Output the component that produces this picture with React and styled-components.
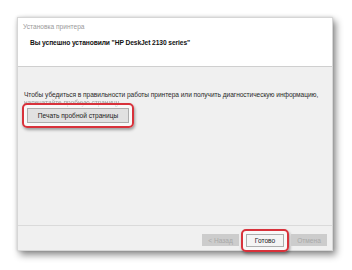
import React from 'react';
import styled, { createGlobalStyle } from 'styled-components';

const GlobalStyle = createGlobalStyle`
  html, body {
    margin: 0;
    padding: 0;
    background: #ffffff;
  }
  body {
    font-family: 'Liberation Sans', Arial, sans-serif;
  }
`;

const Page = styled.div`
  width: 352px;
  height: 270px;
  padding: 17px 0 0 17px;
  box-sizing: border-box;
`;

const Window = styled.div`
  width: 316px;
  height: 234px;
  display: flex;
  flex-direction: column;
  background: #f0f0f0;
  border: 1px solid #d6d6d6;
  box-sizing: border-box;
  box-shadow: 3px 4px 7px rgba(0, 0, 0, 0.45), 0 0 3px rgba(0, 0, 0, 0.15);
`;

const Header = styled.div`
  height: 49px;
  flex-shrink: 0;
  background: #ffffff;
  border-bottom: 1px solid #cfcfcf;
  box-sizing: border-box;
  padding: 4px 0 0 5px;
`;

const Caption = styled.div`
  font-size: 6.6px;
  line-height: 9px;
  color: #9a9a9a;
  white-space: nowrap;
`;

const Heading = styled.div`
  margin: 7px 0 0 7px;
  font-size: 6.7px;
  line-height: 9px;
  font-weight: 700;
  color: #111;
  letter-spacing: -0.1px;
  white-space: nowrap;
`;

const Content = styled.div`
  flex: 1;
  padding: 24px 0 0 6px;
`;

const Paragraph = styled.div`
  font-size: 6.6px;
  line-height: 8px;
  color: #2a2a2a;
  letter-spacing: -0.05px;
  white-space: nowrap;
`;

const FadedLine = styled(Paragraph)`
  color: #a0a0a0;
  filter: blur(0.7px);
`;

const Highlight = styled.div`
  position: relative;
  display: flex;
  width: fit-content;
  margin-top: ${(p) => p.$top || 0}px;
  margin-left: ${(p) => p.$left || 0}px;

  &::before {
    content: '';
    position: absolute;
    inset: ${(p) => -p.$pad}px;
    border: 2px solid #d8323b;
    border-radius: 5px;
    background: rgba(255, 255, 255, 0.5);
    box-shadow: 1px 2px 3px rgba(0, 0, 0, 0.35), inset 0 0 2px rgba(255, 255, 255, 0.8);
  }
`;

const Button = styled.div`
  position: relative;
  width: ${(p) => p.$w}px;
  height: ${(p) => p.$h}px;
  display: flex;
  align-items: center;
  justify-content: center;
  box-sizing: border-box;
  font-size: 6.6px;
  white-space: nowrap;
  color: ${(p) => (p.$disabled ? '#a8a8a8' : '#222')};
  background: ${(p) => (p.$disabled ? '#cccccc' : p.$light ? '#f4f4f4' : '#e1e1e1')};
  border: 1px solid ${(p) => (p.$disabled ? '#cccccc' : '#adadad')};
`;

const Footer = styled.div`
  height: 25px;
  flex-shrink: 0;
  border-top: 1px solid #dadada;
  box-sizing: border-box;
  display: flex;
  align-items: flex-start;
  justify-content: flex-end;
  gap: 7px;
  padding: 8px 5px 0 0;
`;

const App = () => (
  <Page>
    <GlobalStyle />
    <Window>
      <Header>
        <Caption>Установка принтера</Caption>
        <Heading>Вы успешно установили "HP DeskJet 2130 series"</Heading>
      </Header>
      <Content>
        <Paragraph>
          Чтобы убедиться в правильности работы принтера или получить диагностическую информацию,
        </Paragraph>
        <FadedLine>напечатайте пробную страницу.</FadedLine>
        <Highlight $pad={5} $top={1} $left={3}>
          <Button $w={102} $h={15}>Печать пробной страницы</Button>
        </Highlight>
      </Content>
      <Footer>
        <Button $w={37} $h={12} $disabled>&lt; Назад</Button>
        <Highlight $pad={5}>
          <Button $w={38} $h={13} $light>Готово</Button>
        </Highlight>
        <Button $w={36} $h={12} $disabled>Отмена</Button>
      </Footer>
    </Window>
  </Page>
);

export default App;
